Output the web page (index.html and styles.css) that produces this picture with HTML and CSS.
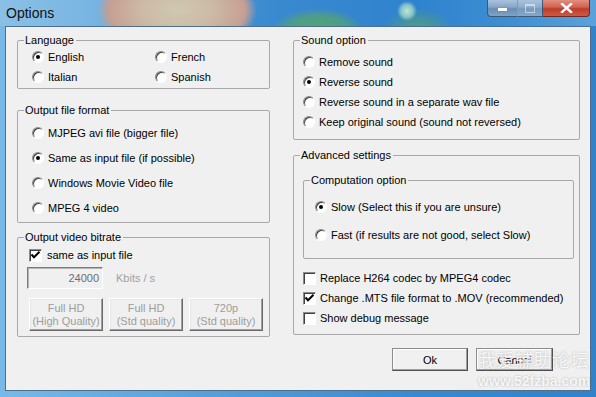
FILE: index.html
```html
<!DOCTYPE html>
<html lang="en">

<head>
    <meta charset="UTF-8">
    <title>Options</title>
    <link rel="stylesheet" href="styles.css">
</head>

<body>
    <div class="window">
        <div class="titlebar">
            <span class="title">Options</span>
            <div class="caption-buttons">
                <span class="cap cap-min"><i></i></span>
                <span class="cap cap-max"><i></i></span>
                <span class="cap cap-close">
                    <svg width="13" height="10" viewBox="0 0 13 10">
                        <path d="M2 1 L11 9 M11 1 L2 9" stroke="#fff" stroke-width="2.4" stroke-linecap="square" fill="none" />
                    </svg>
                </span>
            </div>
        </div>

        <div class="client">
            <!-- left column -->
            <div class="col col-left">
                <fieldset class="group group-lang">
                    <legend>Language</legend>
                    <div class="lang-grid">
                        <label class="opt"><span class="radio checked"></span>English</label>
                        <label class="opt"><span class="radio"></span>French</label>
                        <label class="opt"><span class="radio"></span>Italian</label>
                        <label class="opt"><span class="radio"></span>Spanish</label>
                    </div>
                </fieldset>

                <fieldset class="group group-format">
                    <legend>Output file format</legend>
                    <div class="opt-list">
                        <label class="opt"><span class="radio"></span>MJPEG avi file (bigger file)</label>
                        <label class="opt"><span class="radio checked"></span>Same as input file (if possible)</label>
                        <label class="opt"><span class="radio"></span>Windows Movie Video file</label>
                        <label class="opt"><span class="radio"></span>MPEG 4 video</label>
                    </div>
                </fieldset>

                <fieldset class="group group-bitrate">
                    <legend>Output video bitrate</legend>
                    <div class="bitrate-body">
                        <label class="opt opt-check">
                            <span class="check checked">
                                <svg width="11" height="11" viewBox="0 0 11 11">
                                    <path d="M1.5 4.5 L4 7.2 L9.5 1.8" stroke="#000" stroke-width="2" fill="none" />
                                </svg>
                            </span>same as input file
                        </label>
                        <div class="rate-row">
                            <span class="rate-input">24000</span>
                            <span class="rate-unit">Kbits / s</span>
                        </div>
                        <div class="preset-row">
                            <button type="button" class="btn btn-preset" disabled>Full HD<br>(High Quality)</button>
                            <button type="button" class="btn btn-preset" disabled>Full HD<br>(Std quality)</button>
                            <button type="button" class="btn btn-preset" disabled>720p<br>(Std quality)</button>
                        </div>
                    </div>
                </fieldset>
            </div>

            <!-- right column -->
            <div class="col col-right">
                <fieldset class="group group-sound">
                    <legend>Sound option</legend>
                    <div class="opt-list">
                        <label class="opt"><span class="radio"></span>Remove sound</label>
                        <label class="opt"><span class="radio checked"></span>Reverse sound</label>
                        <label class="opt"><span class="radio"></span>Reverse sound in a separate wav file</label>
                        <label class="opt"><span class="radio"></span>Keep original sound (sound not reversed)</label>
                    </div>
                </fieldset>

                <fieldset class="group group-advanced">
                    <legend>Advanced settings</legend>
                    <div class="advanced-body">
                        <fieldset class="group group-compute">
                            <legend>Computation option</legend>
                            <div class="opt-list">
                                <label class="opt"><span class="radio checked"></span>Slow (Select this if you are unsure)</label>
                                <label class="opt"><span class="radio"></span>Fast (if results are not good, select Slow)</label>
                            </div>
                        </fieldset>
                        <div class="check-list">
                            <label class="opt opt-check"><span class="check"></span>Replace H264 codec by MPEG4 codec</label>
                            <label class="opt opt-check">
                                <span class="check checked">
                                    <svg width="11" height="11" viewBox="0 0 11 11">
                                        <path d="M1.5 4.5 L4 7.2 L9.5 1.8" stroke="#000" stroke-width="2" fill="none" />
                                    </svg>
                                </span>Change .MTS file format to .MOV (recommended)
                            </label>
                            <label class="opt opt-check"><span class="check"></span>Show debug message</label>
                        </div>
                    </div>
                </fieldset>

                <div class="dialog-buttons">
                    <button type="button" class="btn btn-ok">Ok</button>
                    <button type="button" class="btn btn-cancel">Cancel</button>
                </div>
            </div>
        </div>

        <div class="watermark">
            <span class="wm-cn">我爱辅助论坛</span>
            <span class="wm-url">www.52fzba.com</span>
        </div>
    </div>
</body>

</html>
```

FILE: styles.css
```css
/* page */
body {
    margin: 0;
    font-family: "Liberation Sans", Arial, sans-serif;
    font-size: 11px;
    color: #000;
    background: #3f8fd2;
}

/* window frame */
.window {
    position: relative;
    width: 596px;
    height: 397px;
    overflow: hidden;
    background: linear-gradient(to right, #79b9e6 0%, #5aa3dc 30%, #3a89cf 70%, #3282c9 100%);
}

.titlebar {
    display: flex;
    align-items: flex-start;
    height: 26px;
    background:
        radial-gradient(ellipse 10px 10px at 407px 11px, rgba(196, 236, 216, 0.95) 0%, rgba(170, 222, 200, 0.7) 60%, rgba(170, 222, 200, 0) 100%),
        radial-gradient(ellipse 36px 22px at 418px 30px, rgba(92, 168, 100, 0.85) 0%, rgba(92, 168, 100, 0) 100%),
        radial-gradient(ellipse 48px 26px at 318px 34px, rgba(90, 170, 96, 0.95) 0%, rgba(90, 170, 96, 0.6) 70%, rgba(90, 170, 96, 0) 100%),
        radial-gradient(ellipse 80px 46px at 177px 10px, #d0c8b2 0%, #ccbaa6 45%, #c69f93 85%, rgba(198, 159, 147, 0) 100%),
        linear-gradient(to right, #8ac0e6 0%, #7ab6e2 14%, #3a8ad0 45%, #2f82cd 70%, #3d8fd3 85%, #5aa2db 100%);
}

.title {
    padding: 4px 0 0 6px;
    font-size: 14px;
    line-height: 18px;
    color: #111;
}

/* caption buttons */
.caption-buttons {
    display: flex;
    margin-left: auto;
    margin-right: 6px;
    height: 18px;
}

.cap {
    display: flex;
    align-items: center;
    justify-content: center;
    height: 17px;
    box-sizing: border-box;
    border: 1px solid #3e5878;
    border-top: none;
}

.cap-min {
    width: 30px;
    border-right: none;
    border-bottom-left-radius: 4px;
    background: linear-gradient(to bottom, #a9c3dd 0%, #86a6c7 45%, #6a8db4 55%, #7fa2c6 100%);
}

.cap-min i {
    display: block;
    width: 9px;
    height: 3px;
    margin-top: 3px;
    background: #fff;
    box-shadow: 0 0 1px #33506f;
}

.cap-max {
    width: 26px;
    border-left: 1px solid #7d9cbd;
    background: linear-gradient(to bottom, #a9c3dd 0%, #8eadcc 45%, #7898bd 55%, #88a8ca 100%);
}

.cap-max i {
    display: block;
    width: 8px;
    height: 6px;
    border: 1px solid rgba(255, 255, 255, 0.5);
    border-top-width: 2px;
}

.cap-close {
    width: 47px;
    border-left: none;
    border-color: #6f2a22;
    border-bottom-right-radius: 4px;
    background: linear-gradient(to bottom, #e1907f 0%, #d1614f 45%, #bd3d2a 55%, #cb5b45 100%);
}

/* client area */
.client {
    display: flex;
    gap: 23px;
    width: 586px;
    height: 365px;
    margin-left: 5px;
    box-sizing: border-box;
    padding: 6px 0 0 11px;
    border: 1px solid #4d6f92;
    background: #f0f0f0;
}

.col {
    display: flex;
    flex-direction: column;
}

.col-left {
    width: 253px;
}

.col-right {
    width: 287px;
}

/* group boxes */
.group {
    margin: 0;
    padding: 0;
    min-width: 0;
    box-sizing: border-box;
    border: 1px solid #a8a8a8;
    border-radius: 2px;
}

.group legend {
    margin-left: 6px;
    padding: 0 2px 0 1px;
    line-height: 14px;
}

.group-lang {
    height: 56px;
}

.group-format {
    height: 120px;
    margin-top: 14px;
}

.group-bitrate {
    height: 107px;
    margin-top: 7px;
}

.bitrate-body {
    padding-left: 11px;
}

.group-sound {
    height: 107px;
}

.group-advanced {
    height: 187px;
    margin-top: 8px;
}

.advanced-body {
    padding-left: 9px;
}

.group-compute {
    width: 271px;
    height: 86px;
    margin-top: 11px;
}

/* options */
.opt {
    display: flex;
    align-items: center;
    height: 20px;
    white-space: nowrap;
}

.lang-grid {
    display: grid;
    grid-template-columns: 123px 1fr;
    padding-left: 14px;
}

.group-format .opt-list {
    padding: 3px 0 0 14px;
}

.group-format .opt {
    height: 25px;
}

.group-sound .opt-list {
    padding: 5px 0 0 9px;
}

.group-compute .opt-list {
    padding: 6px 0 0 11px;
}

.group-compute .opt {
    height: 28px;
}

.check-list {
    margin-top: 9px;
}

/* radio button, classic sunken look */
.radio {
    position: relative;
    flex: none;
    width: 12px;
    height: 12px;
    margin-right: 4px;
    box-sizing: border-box;
    border-radius: 50%;
    border: 1px solid;
    border-color: #8a8a8a #fff #fff #8a8a8a;
    box-shadow: inset 1px 1px 0 #404040;
    background: #fff;
}

.radio.checked::after {
    content: "";
    position: absolute;
    left: 3px;
    top: 3px;
    width: 4px;
    height: 4px;
    border-radius: 50%;
    background: #000;
}

/* check box */
.check {
    display: flex;
    align-items: center;
    justify-content: center;
    flex: none;
    width: 13px;
    height: 13px;
    margin-right: 4px;
    box-sizing: border-box;
    border: 1px solid;
    border-color: #8a8a8a #fff #fff #8a8a8a;
    box-shadow: inset 1px 1px 0 #404040;
    background: #fff;
}

.group-bitrate .opt-check {
    padding-top: 1px;
}

.group-bitrate .check {
    margin-right: 5px;
}

/* bitrate input */
.rate-row {
    display: flex;
    align-items: center;
    margin: 2px 0 0 -2px;
}

.rate-input {
    width: 76px;
    height: 22px;
    box-sizing: border-box;
    padding-right: 3px;
    line-height: 20px;
    text-align: right;
    color: #6d6d6d;
    border: 1px solid;
    border-color: #7a7a7a #fff #fff #7a7a7a;
    box-shadow: inset 1px 1px 0 #b5b5b5;
    background: #f0f0f0;
}

.rate-unit {
    margin-left: 13px;
    color: #a0a0a0;
}

/* buttons */
.btn {
    font-family: inherit;
    font-size: 11px;
    padding: 0;
    box-sizing: border-box;
    background: #f0f0f0;
    border: 1px solid;
    border-color: #fff #6a6a6a #6a6a6a #fff;
    box-shadow: inset -1px -1px 0 #a0a0a0, inset 1px 1px 0 #e6e6e6;
    color: #000;
}

.preset-row {
    display: flex;
    gap: 6px;
    margin-top: 9px;
}

.btn-preset {
    width: 74px;
    height: 33px;
    line-height: 13px;
    color: #9d9d9d;
}

.dialog-buttons {
    display: flex;
    gap: 8px;
    margin-top: 13px;
    padding-left: 99px;
}

.btn-ok,
.btn-cancel {
    width: 76px;
    height: 23px;
    border-color: #8c8c8c #505050 #505050 #8c8c8c;
    box-shadow: inset -1px -1px 0 #a0a0a0, inset 1px 1px 0 #fff;
}

.btn-cancel {
    width: 77px;
}

/* site watermark over the corner */
.watermark {
    position: absolute;
    left: 478px;
    top: 347px;
    display: flex;
    flex-direction: column;
    color: rgba(255, 255, 255, 0.88);
    text-shadow: 0 0 2px rgba(90, 90, 90, 0.45);
    pointer-events: none;
}

.wm-cn {
    font-family: "Noto Sans CJK SC", sans-serif;
    font-size: 18px;
    line-height: 24px;
    letter-spacing: 0.5px;
}

.wm-url {
    font-family: "Liberation Sans", Arial, sans-serif;
    font-weight: bold;
    font-size: 14px;
    line-height: 18px;
    margin-top: 1px;
}
```
